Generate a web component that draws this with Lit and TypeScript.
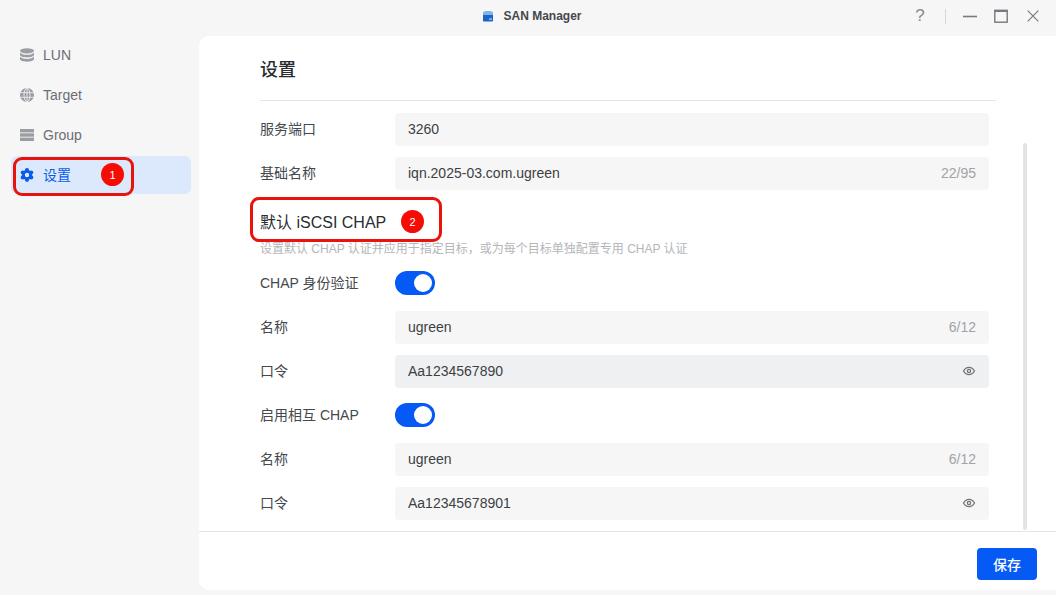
import { LitElement, html, css, svg } from "lit";
import { customElement } from "lit/decorators.js";

const eye = svg`<svg width="14" height="14" viewBox="0 0 14 14" fill="none" stroke="#6f7277" stroke-width="1.3"><path d="M1.500 7c1.400-2.400 3.300-3.600 5.500-3.600s4.100 1.200 5.500 3.600c-1.400 2.400-3.300 3.600-5.500 3.600S2.900 9.400 1.500 7z"/><circle cx="7" cy="7" r="1.600"/></svg>`;

@customElement("app-root")
export class AppRoot extends LitElement {
  static styles = css`
    :host { display: block; width: 1056px; height: 595px; overflow: hidden; position: relative; background: #f6f6f7; font-family: "Liberation Sans", "Noto Sans CJK SC", sans-serif; font-size: 14px; color: #3c3f44; }
    .titlebar { height: 36px; position: relative; display: flex; align-items: center; justify-content: center; }
    .app { display: flex; align-items: center; gap: 8px; font-size: 12px; font-weight: 700; color: #44474c; margin-left: 7px; margin-top: -5px; }
    .controls { position: absolute; top: 0; left: 0; right: 0; height: 32px; display: flex; align-items: center; justify-content: flex-end; padding-right: 17px; }
    .help { font-size: 17px; color: #85888d; margin-right: 20px; width: 10px; text-align: center; }
    .sep { width: 1px; height: 15px; background: #d5d6d8; margin-right: 17px; }
    .controls svg { display: block; }
    .body { display: flex; height: 554px; }
    .side { width: 199px; flex: none; padding: 0 8px 0 11px; box-sizing: border-box; display: flex; flex-direction: column; gap: 2px; }
    .nav { height: 38px; flex: none; display: flex; align-items: center; gap: 9px; padding-left: 9px; border-radius: 6px; color: #6b6e74; }
    .nav.on { background: #dce9fd; color: #0a5ce6; }
    .nav.on span { margin-top: -2px; }
    .main { flex: 1; background: #fff; border-radius: 10px 0 0 10px; display: flex; flex-direction: column; min-width: 0; }
    .content { flex: 1; padding: 0 60px 0 61px; min-height: 0; position: relative; }
    h1 { margin: 0; height: 64px; border-bottom: 1px solid #e4e5e7; font-size: 18px; font-weight: 500; color: #2a2c30; line-height: 69px; }
    .rows { padding-top: 6px; display: flex; flex-direction: column; }
    .row { height: 44px; display: flex; align-items: center; flex: none; }
    .label { width: 135px; flex: none; color: #45484d; margin-top: -3px; }
    .input { width: 594px; height: 33px; box-sizing: border-box; background: #f6f6f6; border-radius: 4px; display: flex; align-items: center; justify-content: space-between; padding: 0 13px; color: #3c3f44; }
    .input.hover { background: #eff0f1; }
    .input svg { display: block; }
    .count { color: #a0a3a7; }
    .head { font-size: 16px; color: #2a2c30; height: 27px; margin-top: 12px; display: flex; align-items: center; }
    .desc { font-size: 12px; color: #b4b6b9; height: 17px; margin-top: 5px; margin-bottom: 5px; display: flex; align-items: center; }
    .toggle { width: 40px; height: 24px; border-radius: 12px; background: #0559f5; position: relative; }
    .toggle::after { content: ""; position: absolute; width: 18px; height: 18px; border-radius: 50%; background: #fff; right: 3px; top: 3px; }
    .scroll { position: absolute; right: 29px; top: 107px; width: 4px; height: 387px; background: #e2e3e5; border-radius: 2px; }
    .foot { height: 59px; box-sizing: border-box; flex: none; border-top: 1px solid #e4e5e7; display: flex; justify-content: flex-end; padding: 16px 19px 0 0; }
    .save { width: 60px; height: 32px; border: 0; border-radius: 4px; background: #0559f5; color: #fff; font: 500 14px "Liberation Sans", "Noto Sans CJK SC", sans-serif; padding: 0; }
    .mark { position: absolute; border: 3px solid #e8140c; border-radius: 9px; box-sizing: border-box; }
    .m1 { left: 13px; top: 157px; width: 121px; height: 39px; }
    .m2 { left: 250px; top: 197px; width: 192px; height: 45px; }
    .badge { position: absolute; width: 23px; height: 23px; border-radius: 50%; background: #f50d05; color: #fff; font-size: 11px; display: flex; align-items: center; justify-content: center; }
    .b1 { left: 101px; top: 163px; }
    .b2 { left: 401px; top: 210px; }
  `;

  render() {
    return html`
      <div class="titlebar">
        <div class="app">
          <svg width="14" height="14" viewBox="0 0 14 14"><path d="M2 3.500C2 2.500 4 2 7 2s5 .5 5 1.500V6H2z" fill="#7fb4ea"/><path d="M2 6h10v5.500c0 .6-.5 1-1 1H3c-.5 0-1-.4-1-1z" fill="#1f63c8"/><rect x="8" y="9.500" width="3" height="1.200" fill="#bcd8f5"/></svg>
          <span>SAN Manager</span>
        </div>
        <div class="controls">
          <span class="help">?</span><span class="sep"></span>
          <svg width="14" height="14" viewBox="0 0 14 14" style="margin-right:17px"><path d="M0 7.500h14" stroke="#77797e" stroke-width="1.600"/></svg>
          <svg width="14" height="14" viewBox="0 0 14 14" style="margin-right:19px" fill="none"><rect x=".8" y="1.300" width="12.400" height="11.900" stroke="#77797e" stroke-width="1.400"/><path d="M.8 2h12.400" stroke="#77797e" stroke-width="2"/></svg>
          <svg width="12" height="12" viewBox="0 0 12 12"><path d="M.7.700l10.600 10.600M11.300.700L.7 11.300" stroke="#77797e" stroke-width="1.200"/></svg>
        </div>
      </div>
      <div class="body">
        <aside class="side">
          <div class="nav">
            <svg width="14" height="14" viewBox="0 0 14 14" fill="#9a9da1"><ellipse cx="7" cy="2.800" rx="7" ry="2.600"/><path d="M0 4.500c1 1.600 3.600 2.300 7 2.300s6-.7 7-2.300v2.300C14 8.400 10.900 9.400 7 9.400S0 8.400 0 6.800z"/><path d="M0 8.600c1 1.600 3.600 2.300 7 2.300s6-.7 7-2.300v2.500c0 1.600-3.100 2.600-7 2.600s-7-1-7-2.600z"/></svg>
            <span>LUN</span>
          </div>
          <div class="nav">
            <svg width="14" height="14" viewBox="0 0 14 14"><circle cx="7" cy="7" r="7" fill="#9a9da1"/><g fill="none" stroke="#f6f6f7" stroke-width=".8"><ellipse cx="7" cy="7" rx="3" ry="6.800"/><path d="M.4 4.700h13.200M.4 9.300h13.200M7 0v14"/></g></svg>
            <span>Target</span>
          </div>
          <div class="nav">
            <svg width="14" height="14" viewBox="0 0 14 14" fill="#9a9da1"><rect y="1" width="14" height="3.400"/><rect y="5.300" width="14" height="3.400"/><rect y="9.600" width="14" height="3.400"/></svg>
            <span>Group</span>
          </div>
          <div class="nav on">
            <svg width="14" height="14" viewBox="0 0 14 14"><g fill="#0a5ce6"><circle cx="7" cy="7" r="5"/><circle cx="7" cy="2.200" r="2.100"/><circle cx="7" cy="11.800" r="2.100"/><circle cx="2.800" cy="4.600" r="2.100"/><circle cx="11.200" cy="4.600" r="2.100"/><circle cx="2.800" cy="9.400" r="2.100"/><circle cx="11.200" cy="9.400" r="2.100"/></g><circle cx="7" cy="7" r="2.200" fill="#dce9fd"/></svg>
            <span>设置</span>
          </div>
        </aside>
        <main class="main">
          <div class="content">
            <h1>设置</h1>
            <div class="rows">
              <div class="row"><span class="label">服务端口</span><div class="input"><span>3260</span></div></div>
              <div class="row"><span class="label">基础名称</span><div class="input"><span>iqn.2025-03.com.ugreen</span><span class="count">22/95</span></div></div>
              <div class="head">默认 iSCSI CHAP</div>
              <div class="desc">设置默认 CHAP 认证并应用于指定目标，或为每个目标单独配置专用 CHAP 认证</div>
              <div class="row"><span class="label">CHAP 身份验证</span><div class="toggle"></div></div>
              <div class="row"><span class="label">名称</span><div class="input"><span>ugreen</span><span class="count">6/12</span></div></div>
              <div class="row"><span class="label">口令</span><div class="input hover"><span>Aa1234567890</span>${eye}</div></div>
              <div class="row"><span class="label">启用相互 CHAP</span><div class="toggle"></div></div>
              <div class="row"><span class="label">名称</span><div class="input"><span>ugreen</span><span class="count">6/12</span></div></div>
              <div class="row"><span class="label">口令</span><div class="input"><span>Aa12345678901</span>${eye}</div></div>
            </div>
            <div class="scroll"></div>
          </div>
          <div class="foot"><button class="save">保存</button></div>
        </main>
      </div>
      <div class="mark m1"></div>
      <div class="badge b1">1</div>
      <div class="mark m2"></div>
      <div class="badge b2">2</div>
    `;
  }
}
